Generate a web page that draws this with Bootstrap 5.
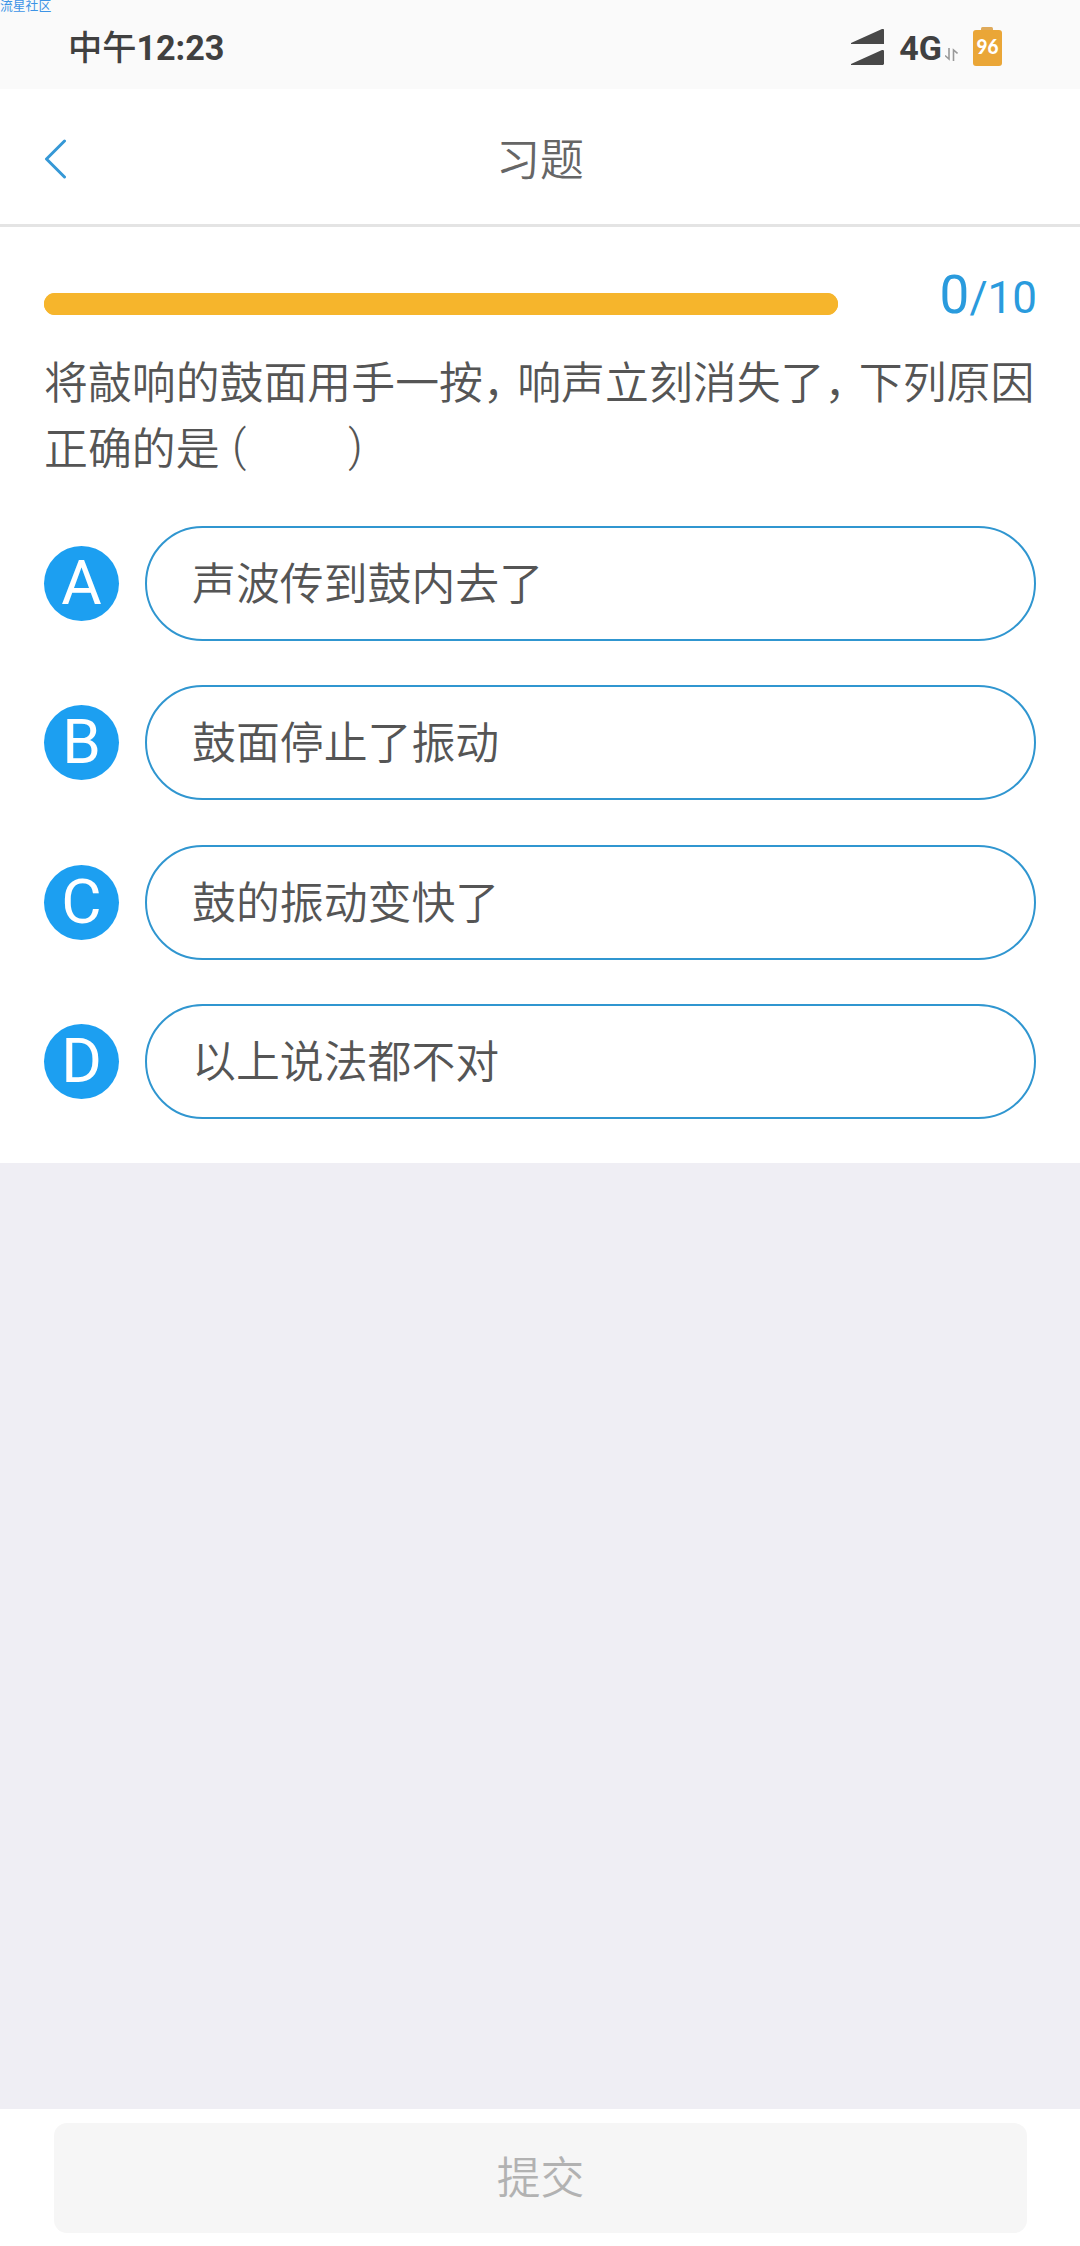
<!DOCTYPE html>
<html lang="zh-CN">
<head>
<meta charset="utf-8">
<meta name="viewport" content="width=device-width, initial-scale=1">
<title>习题</title>
<link href="https://cdn.jsdelivr.net/npm/bootstrap@5.3.0/dist/css/bootstrap.min.css" rel="stylesheet">
<style>
  body { font-family: Roboto, "Noto Sans CJK SC", sans-serif; font-weight: 350; color: #555; background: #efeef4; line-height: 1; }
  .screen { height: 2246px; }
  .status { height: 89px; background: #fafafa; padding: 7px 78px 0 68px; color: #404040; }
  .clock, .net { font-size: 34px; font-weight: 500; line-height: 82px; }
  .clock { font-size: 34.2px; }
  .clock b { font-weight: 700; }
  .watermark { left: 0; top: 0; font-size: 12.8px; line-height: 12px; color: #3d94e6; font-weight: 400; }
  .signal { margin: 0 15px 1px 0; }
  .arrows { margin: 12px 15px 0 3px; }
  .battery { margin-bottom: 3px; }
  .titlebar { height: 138px; border-bottom: 3px solid #e4e4e4; padding: 4px 44px 0; }
  .titlebar h1 { font-size: 43.8px; font-weight: 350; color: #666; padding-top: 6px; }
  .edge { width: 24px; }
  .quiz { height: 936px; padding: 46px 44px 0; }
  .meter { width: 794px; height: 22px; border-radius: 11px; background: #f6b52c; margin-top: 20px; }
  .meter .progress-bar { background: #f6b52c; }
  .tally { color: #2a9bdd; font-size: 44px; font-weight: 400; line-height: 44px; margin-right: -1px; }
  .tally span { font-size: 53px; }
  .question { font-size: 43.9px; line-height: 66px; margin: 31px -10px 0 0; white-space: nowrap; }
  .comma { letter-spacing: -9.6px; }
  .paren { display: inline-block; line-height: 1; transform: translate(2px, -4px); }
  .blank { display: inline-block; width: 102px; }
  .choices { gap: 44.3px; margin-top: 43px; }
  .letter { width: 75px; height: 75px; background: #1c9ff1; font-size: 62px; font-weight: 400; line-height: 73px; margin-right: 26px; }
  .answer { height: 115px; border: 2px solid #3096d0 !important; padding: 5px 45px 0; font-size: 43.9px; }
  .submitbar { height: 137px; padding: 14px 53px 0 54px; }
  .submitbar .btn { height: 110px; border: 0; border-radius: 13px; background: #f6f6f6; color: #b2b2b2; font-size: 43.8px; font-weight: 350; opacity: 1; padding: 4px 0 0; }
</style>
</head>
<body>
<div class="screen d-flex flex-column">
  <div class="status d-flex justify-content-between align-items-start position-relative">
    <span class="watermark position-absolute">流星社区</span>
    <div class="clock">中午<b>12:23</b></div>
    <div class="d-flex align-items-center">
      <svg class="signal" width="33" height="37" viewBox="0 0 33 37" fill="#484848"><path d="M0 15V14L31 0Q33-.5 33 1V15ZM0 36V35L31 21Q33 20.500 33 22V35L32 36Z"/></svg>
      <span class="net"><b>4G</b></span>
      <svg class="arrows" width="13" height="13" viewBox="0 0 13 13" fill="none" stroke="#999" stroke-width="1.6"><path d="M4 0V11L0 7.500M8.500 13V2L12.500 5.500"/></svg>
      <svg class="battery" width="29" height="39" viewBox="0 0 29 39"><path d="M8 4V1.500Q8 0 9.500 0H18.500Q20 0 20 1.500V4Z" fill="#dfaa5a"/><rect y="3" width="29" height="36" rx="3" fill="#eaa637"/><text x="14.500" y="26.500" text-anchor="middle" font-family="Lato" font-weight="900" font-size="21.500" textLength="22" lengthAdjust="spacingAndGlyphs" fill="#fff">96</text></svg>
    </div>
  </div>

  <header class="titlebar bg-white d-flex justify-content-between align-items-center">
    <svg class="edge" width="24" height="40" viewBox="0 0 24 40" fill="none" stroke="#3598d6" stroke-width="3" stroke-linecap="round" stroke-linejoin="round"><path d="M20.500 2L2.500 20L20.500 38"/></svg>
    <h1 class="mb-0">习题</h1>
    <span class="edge"></span>
  </header>

  <main class="quiz bg-white">
    <div class="d-flex justify-content-between align-items-start">
      <div class="progress meter"><div class="progress-bar w-100"></div></div>
      <div class="tally"><span>0</span>/10</div>
    </div>
    <p class="question mb-0">将敲响的鼓面用手一按<span class="comma">，</span>响声立刻消失了<span class="comma">，</span>下列原因<br>正确的是 <span class="paren">(<span class="blank"></span>)</span></p>
    <div class="choices d-flex flex-column">
      <div class="d-flex align-items-center"><span class="letter rounded-circle text-white text-center">A</span><div class="answer rounded-pill flex-grow-1 d-flex align-items-center">声波传到鼓内去了</div></div>
      <div class="d-flex align-items-center"><span class="letter rounded-circle text-white text-center">B</span><div class="answer rounded-pill flex-grow-1 d-flex align-items-center">鼓面停止了振动</div></div>
      <div class="d-flex align-items-center"><span class="letter rounded-circle text-white text-center">C</span><div class="answer rounded-pill flex-grow-1 d-flex align-items-center">鼓的振动变快了</div></div>
      <div class="d-flex align-items-center"><span class="letter rounded-circle text-white text-center">D</span><div class="answer rounded-pill flex-grow-1 d-flex align-items-center">以上说法都不对</div></div>
    </div>
  </main>

  <footer class="submitbar bg-white mt-auto"><button class="btn w-100" type="button" disabled>提交</button></footer>
</div>
<script src="https://cdn.jsdelivr.net/npm/bootstrap@5.3.0/dist/js/bootstrap.bundle.min.js"></script>
</body>
</html>
